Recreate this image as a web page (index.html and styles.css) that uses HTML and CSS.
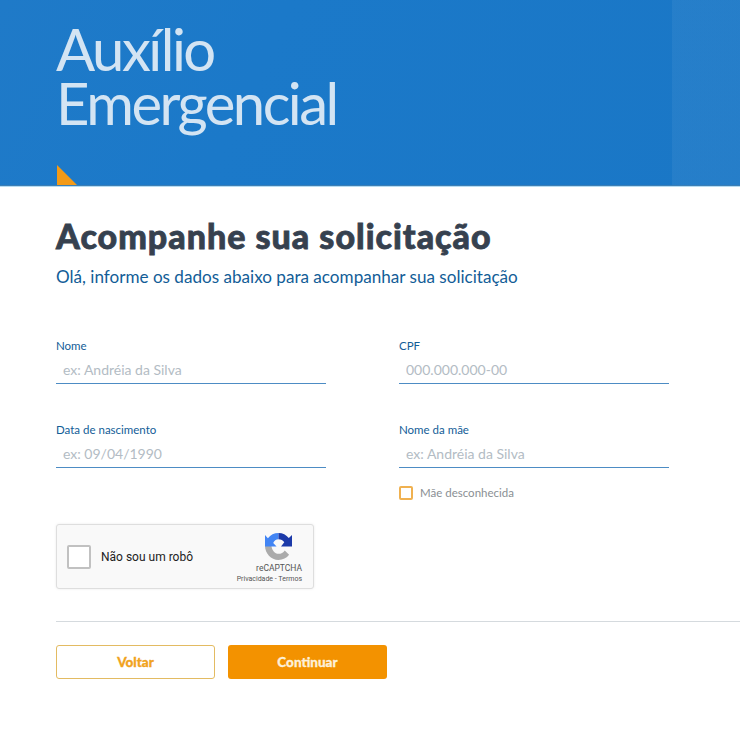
FILE: index.html
```html
<!DOCTYPE html>
<html lang="pt-BR">
<head>
  <meta charset="utf-8">
  <title>Auxílio Emergencial</title>
  <link rel="stylesheet" href="styles.css">
</head>
<body>
  <div class="hero">
    <h1 class="hero-title">Auxílio<br>Emergencial</h1>
    <div class="hero-mark"></div>
  </div>

  <div class="content">
    <h2 class="title">Acompanhe sua solicitação</h2>
    <p class="subtitle">Olá, informe os dados abaixo para acompanhar sua solicitação</p>

    <form class="form-grid">
      <div class="field">
        <label class="field-label">Nome</label>
        <input class="field-input" type="text" placeholder="ex: Andréia da Silva">
      </div>
      <div class="field">
        <label class="field-label">CPF</label>
        <input class="field-input" type="text" placeholder="000.000.000-00">
      </div>
      <div class="field">
        <label class="field-label">Data de nascimento</label>
        <input class="field-input" type="text" placeholder="ex: 09/04/1990">
      </div>
      <div class="field">
        <label class="field-label">Nome da mãe</label>
        <input class="field-input" type="text" placeholder="ex: Andréia da Silva">
        <div class="unknown">
          <span class="unknown-box"></span>
          <span>Mãe desconhecida</span>
        </div>
      </div>
    </form>

    <!-- reCAPTCHA -->
    <div class="captcha">
      <span class="captcha-box"></span>
      <span class="captcha-text">Não sou um robô</span>
      <div class="captcha-brand">
        <svg class="captcha-logo" viewBox="0 0 28 28" width="27" height="27">
          <path fill="#ababab" d="M0 13c0 8.300 6.300 15 14 15 4.500 0 8.500-2.100 11-5.400l-4.500-4.500C19 20.300 16.700 21.600 14 21.600c-3.800 0-6.800-3.400-7.400-8.600z"/>
          <path fill="#4285f4" d="M14 0A14 14 0 0 0 3 5.400L0 2v12h12L8.500 10.400A6.500 6.500 0 0 1 14 6.400z"/>
          <path fill="#1c3aa9" d="M28 14V2l-3.300 3.300A14 14 0 0 0 14 0v6.400c2.600 0 4.700 1.200 6 3.200L16.600 14z"/>
        </svg>
        <div class="captcha-name">reCAPTCHA</div>
        <div class="captcha-links">Privacidade - Termos</div>
      </div>
    </div>

    <div class="divider"></div>

    <div class="actions">
      <button class="btn btn-outline" type="button">Voltar</button>
      <button class="btn btn-solid" type="button">Continuar</button>
    </div>
  </div>
</body>
</html>
```

FILE: styles.css
```css
* {
  box-sizing: border-box;
}

body {
  margin: 0;
  background: #fff;
  font-family: 'Lato', 'Liberation Sans', sans-serif;
}

.hero {
  height: 186px;
  padding: 22px 0 0 56px;
  display: flex;
  flex-direction: column;
  justify-content: space-between;
  background:
    linear-gradient(90deg, transparent 672px, rgba(255,255,255,0.05) 672px),
    linear-gradient(115deg, #1f7ac8 0%, #1b79c9 35%, #1a77c6 100%);
  border-bottom: 1px solid #3d7fb5;
  box-shadow: 0 1px 0 #b5dcf3;
}

.hero-title {
  margin: 0;
  font-size: 58px;
  line-height: 54px;
  font-weight: 400;
  letter-spacing: -2.5px;
  color: #d3e4f3;
}

.hero-mark {
  width: 20px;
  height: 20px;
  margin-left: 1px;
  background: #f39a17;
  clip-path: polygon(0 0, 100% 100%, 0 100%);
}

.content {
  padding: 30px 0 0 56px;
}

.title {
  margin: 0;
  font-size: 34px;
  line-height: 40px;
  font-weight: 900;
  letter-spacing: 1px;
  -webkit-text-stroke: 0.8px #36414f;
  color: #36414f;
}

.subtitle {
  margin: 9px 0 0;
  font-size: 17.1px;
  line-height: 24px;
  color: #125d97;
}

.form-grid {
  display: grid;
  grid-template-columns: 270px 270px;
  column-gap: 73px;
  row-gap: 38px;
  margin-top: 49px;
}

.field-label {
  display: block;
  font-size: 11.5px;
  line-height: 16px;
  color: #125d97;
}

.field-input {
  display: block;
  width: 100%;
  height: 29px;
  margin-top: 1px;
  padding: 0 7px;
  border: none;
  border-bottom: 1px solid #4d8cc4;
  outline: none;
  background: transparent;
  font-family: inherit;
  font-size: 14px;
  color: #333;
}

.field-input::placeholder {
  color: #b3bcc4;
  opacity: 1;
}

.unknown {
  display: flex;
  align-items: center;
  gap: 7px;
  margin-top: 17px;
  font-size: 11.5px;
  line-height: 15px;
  color: #8a8f94;
}

.unknown-box {
  width: 14px;
  height: 14px;
  border: 2px solid #f0b150;
  border-radius: 2px;
}

.captcha {
  display: flex;
  align-items: center;
  width: 258px;
  height: 65px;
  margin-top: 24px;
  padding: 0 11px 0 10px;
  background: #f9f9f9;
  border: 1px solid #dedede;
  border-radius: 3px;
  box-shadow: 0 0 3px rgba(0,0,0,0.08);
  font-family: 'Roboto', sans-serif;
}

.captcha-box {
  width: 24px;
  height: 24px;
  background: #fff;
  border: 2px solid #c1c1c1;
  border-radius: 2px;
}

.captcha-text {
  margin-left: 10px;
  font-size: 12px;
  color: #222;
}

.captcha-brand {
  display: flex;
  flex-direction: column;
  align-items: flex-end;
  margin-left: auto;
  margin-top: 3px;
  color: #555;
}

.captcha-logo {
  display: block;
  margin-right: 10px;
}

.captcha-name {
  margin-top: 3px;
  font-size: 8.5px;
  line-height: 11px;
}

.captcha-links {
  font-size: 7px;
  line-height: 10px;
}

.divider {
  height: 1px;
  margin-top: 32px;
  background: #d5dade;
}

.actions {
  display: flex;
  gap: 13px;
  margin-top: 23px;
}

.btn {
  width: 159px;
  height: 34px;
  border-radius: 3px;
  font-family: inherit;
  font-size: 13.5px;
  font-weight: 900;
  -webkit-text-stroke: 0.3px currentColor;
  cursor: pointer;
}

.btn-outline {
  background: #fff;
  border: 1px solid #e3bb62;
  color: #f1a31e;
}

.btn-solid {
  background: #f39200;
  border: none;
  color: #fdf0d8;
}
```
